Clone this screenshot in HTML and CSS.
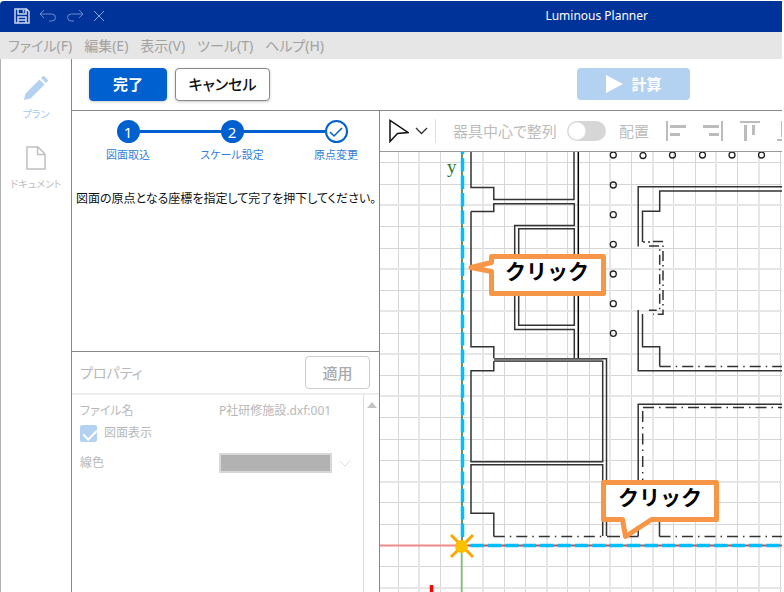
FILE: index.html
```
<!DOCTYPE html>
<html lang="ja">
<head>
<meta charset="utf-8">
<title>Luminous Planner</title>
<link rel="stylesheet" href="styles.css">
</head>
<body>
<div class="app">
  <header class="titlebar">
    <div class="quick">
      <button type="button" aria-label="保存"><svg width="16" height="16" viewBox="0 0 16 16" fill="none" stroke="#c9d6f2" stroke-width="1.5"><path d="M1 1h11.5L15 3.500V15H1zM4 1v5h8V1M9.500 2v2.500M4 15V9h8v6M4 12h8"/></svg></button>
      <button type="button" aria-label="元に戻す" disabled><svg width="18" height="14" viewBox="0 0 18 14" fill="none" stroke="#6f8cc8" stroke-width="1"><path d="M5 1L1 5l4 4M1 5h11.500q4 0 4 3.500t-4 3.500H10"/></svg></button>
      <button type="button" aria-label="やり直す" disabled><svg width="18" height="14" viewBox="0 0 18 14" fill="none" stroke="#6f8cc8" stroke-width="1"><path d="M13 1l4 4-4 4M17 5H5.500q-4 0-4 3.500t4 3.500H8"/></svg></button>
      <button type="button" aria-label="削除" disabled><svg width="12" height="12" viewBox="0 0 12 12" stroke="#8da4d6" stroke-width="1"><path d="M1 1l10 10M11 1L1 11"/></svg></button>
    </div>
    <h1 class="title">Luminous Planner</h1>
  </header>
  <nav class="menubar">
    <a href="#">ファイル(F)</a>
    <a href="#">編集(E)</a>
    <a href="#">表示(V)</a>
    <a href="#">ツール(T)</a>
    <a href="#">ヘルプ(H)</a>
  </nav>
  <div class="body">
    <nav class="rail">
      <a class="rail-item active" href="#">
        <svg width="24" height="24" viewBox="0 0 24 24" fill="#b3d1f0"><path d="M0 24l1.500-6.500L15.500 3.500l5 5L6.500 22.500zM17 2l1.800-1.800q.7-.5 1.400.1l3.500 3.500q.6.700 0 1.400L22 7z"/></svg>
        <span>プラン</span>
      </a>
      <a class="rail-item" href="#">
        <svg width="20" height="24" viewBox="0 0 20 24" fill="none" stroke="#c0c0c0" stroke-width="1.500"><path d="M1 1h11l7 7v15H1zM11.500 1v7.500H19"/></svg>
        <span>ドキュメント</span>
      </a>
    </nav>
    <div class="main">
      <div class="actions">
        <button type="button" class="btn primary">完了</button>
        <button type="button" class="btn">キャンセル</button>
        <button type="button" class="btn calc" disabled><svg width="18" height="18" viewBox="0 0 18 18" fill="#fff"><path d="M1 0l17 9-17 9z"/></svg>計算</button>
      </div>
      <div class="work">
        <aside class="side">
          <section class="wizard">
            <ol class="steps">
              <li><span class="dot">1</span><span class="step-label">図面取込</span></li>
              <li><span class="dot">2</span><span class="step-label">スケール設定</span></li>
              <li><span class="dot open"><svg width="14" height="12" viewBox="0 0 14 12" fill="none" stroke="#0060d0" stroke-width="1.500"><path d="M1 6l4 4 8-8"/></svg></span><span class="step-label">原点変更</span></li>
            </ol>
            <p class="hint">図面の原点となる座標を指定して完了を押下してください。</p>
          </section>
          <section class="props">
            <div class="props-head">
              <h2>プロパティ</h2>
              <button type="button" class="btn apply" disabled>適用</button>
            </div>
            <div class="props-body">
              <div class="fields">
                <div class="row"><span class="name">ファイル名</span><span class="value">P社研修施設.dxf:001</span></div>
                <div class="row"><input type="checkbox" id="show" class="tick" checked disabled><label for="show">図面表示</label></div>
                <div class="row"><label class="name" for="color">線色</label><select id="color" class="swatch" disabled></select><svg width="12" height="7" viewBox="0 0 12 7" fill="none" stroke="#dedede"><path d="M1 1l5 5 5-5"/></svg></div>
              </div>
              <div class="scroll"><svg width="10" height="6" viewBox="0 0 10 6" fill="#c4c4c4"><path d="M0 6l5-6 5 6z"/></svg></div>
            </div>
          </section>
        </aside>
        <section class="view">
          <div class="toolbar">
            <button type="button" class="tool pointer" aria-label="選択"><svg width="20" height="24" viewBox="0 0 20 24" fill="none" stroke="#111" stroke-width="1.500"><path d="M1 1.500v21l7.500-8L19 13.500z"/></svg><svg width="13" height="8" viewBox="0 0 13 8" fill="none" stroke="#333" stroke-width="1.300"><path d="M1 1l5.500 5.500L12 1"/></svg></button>
            <label class="align" for="center">器具中心で整列</label>
            <input type="checkbox" id="center" class="switch" disabled>
            <span class="place">配置</span>
            <button type="button" class="tool" aria-label="左揃え" disabled><svg width="20" height="20" viewBox="0 0 20 20" fill="#bcbcbc"><path d="M0 0h2v20H0zM4 4h16v3H4zM4 12h10v3H4z"/></svg></button>
            <button type="button" class="tool" aria-label="右揃え" disabled><svg width="20" height="20" viewBox="0 0 20 20" fill="#bcbcbc"><path d="M18 0h2v20h-2zM0 4h16v3H0zM6 12h10v3H6z"/></svg></button>
            <button type="button" class="tool" aria-label="上揃え" disabled><svg width="20" height="20" viewBox="0 0 20 20" fill="#bcbcbc"><path d="M0 0h20v2H0zM4 4h3v16H4zM12 4h3v10h-3z"/></svg></button>
            <button type="button" class="tool" aria-label="下揃え" disabled><svg width="20" height="20" viewBox="0 0 20 20" fill="#bcbcbc"><path d="M0 18h20v2H0zM4 0h3v16H4zM12 6h3v10h-3z"/></svg></button>
          </div>
          <div class="canvas">
            <svg class="plan" role="img" aria-label="図面">
              <g transform="translate(-380 -152)" fill="none">
                <path stroke="#d6d6d6" d="M398.500 152V600M440.500 152V600M504.500 152V600M525.500 152V600M567.500 152V600M589.500 152V600M631.500 152V600M673.500 152V600M695.500 152V600M737.500 152V600M780.500 152V600M379 162.500H784M379 184.500H784M379 226.500H784M379 248.500H784M379 290.500H784M379 333.500H784M379 375.500H784M379 417.500H784M379 439.500H784M379 460.500H784M379 502.500H784M379 524.500H784M379 566.500H784"/>
                <path stroke="#e6e6e6" stroke-width="2" d="M419 152V600M483 152V600M547 152V600M610 152V600M653 152V600M716 152V600M759 152V600M379 205H784M379 269H784M379 311H784M379 354H784M379 396H784M379 482H784M379 588H784"/>
                <g stroke="#333" stroke-width="1.500">
                  <path d="M471 152V187.500H493.800V199.500H574V152M471 211.500H493.800V203.700H574.300V225.500H514.700V329.500H574.300V358"/>
                  <path d="M471 211.500V346.700H493.800V358M518.700 228.700H574.300V325.200H518.700z"/>
                  <path d="M578.300 152V358" stroke="#000"/>
                  <path d="M493.800 358.700H606.500V536M493.800 361.200H602.700V461.700H471V370.700H493.800V361.200"/>
                  <path d="M494 360H602" stroke="#777" stroke-width="3"/>
                  <path d="M602.700 536V464.700H471V513.300H493.800V536.500"/>
                  <path d="M784 186.700H638.200V246.500M784 191H659.700V211.300H642.500V242"/>
                  <path d="M638.200 310V370.700H784M642.500 314V346.700H659.700V366.500M638.200 536V404.300H784M659.500 520V536.500M607 536.500H620M628 536.500H638.500"/>
                  <path stroke-dasharray="11 5 1.500 5" d="M493.800 536.500H602M659.500 536.500H784M659.700 366.500H784M643 407.500H784M642.700 411V480"/>
                  <path stroke-dasharray="10 4 1.500 4" d="M653 241.500H663V314.300H653M649 246H659.700V310.300H649M643 242H645M648 242H650"/>
                </g>
                <g stroke="#222" stroke-width="1.300">
                  <circle cx="613.300" cy="155" r="3"/><circle cx="613.300" cy="185" r="3"/><circle cx="613.300" cy="214.700" r="3"/><circle cx="613.300" cy="244.300" r="3"/><circle cx="613.300" cy="274" r="3"/><circle cx="613.300" cy="303.700" r="3"/><circle cx="613.300" cy="333.300" r="3"/>
                  <circle cx="643" cy="155.500" r="3"/><circle cx="672.500" cy="155" r="3"/><circle cx="702.500" cy="155" r="3"/><circle cx="732" cy="155" r="3"/><circle cx="761.500" cy="155" r="3"/>
                </g>
                <path stroke="#f08a8a" stroke-width="2" d="M379 545.500H461"/>
                <path stroke="#8cbb8c" stroke-width="2" d="M461.700 546V600"/>
                <path stroke="#c0504a" stroke-width="2" d="M462 545.500H784"/>
                <path stroke="#3c6b2a" stroke-width="1.500" d="M462 152V545"/>
                <path stroke="#00bfff" stroke-width="3.500" stroke-dasharray="13.400 4" d="M470.500 545.500H784M462.500 537V152"/>
                <path stroke="#f00" stroke-width="3.500" d="M431.500 585V600"/>
                <path stroke="#ffa500" stroke-width="3" d="M451 535l22 22M473 535l-22 22"/>
                <circle cx="461.500" cy="546.500" r="6.500" fill="#ffc000"/>
                <text class="axis" x="447" y="173">y</text>
                <path class="callout" d="M491.500 256.500H603.500V293.500H491.500V271.500L471 267.500L491.500 262.500z"/>
                <text class="callout-text" x="505" y="279">クリック</text>
                <path class="callout" d="M603.500 482.500H716.500V519.500H651.500L625.500 536.500L622.500 519.500H603.500z"/>
                <text class="callout-text" x="618" y="505">クリック</text>
              </g>
            </svg>
          </div>
        </section>
      </div>
    </div>
  </div>
</div>
</body>
</html>
```
FILE: styles.css
```
* { box-sizing: border-box; }
body {
  margin: 0;
  font-family: "Noto Sans", "Noto Sans CJK JP", sans-serif;
  font-feature-settings: "palt";
  color: #111;
  background: #fff;
}
button, input, select { font: inherit; font-feature-settings: inherit; }
button { padding: 0; border: 0; background: none; }
a { color: inherit; text-decoration: none; }
h1, h2, p, ol { margin: 0; padding: 0; font-weight: 400; }
svg { display: block; flex: none; }

.app {
  display: flex;
  flex-direction: column;
  height: 100vh;
  overflow: hidden;
  padding: 1px 2px 0 0;
}
.titlebar {
  display: flex;
  align-items: center;
  flex: none;
  height: 31px;
  padding: 0 134px 2px 14px;
  background: #003399;
  border-radius: 4px 0 0 0;
}
.quick { display: flex; align-items: center; gap: 9px; }
.title { margin-left: auto; font-size: 12px; line-height: 16px; color: #fff; }
.menubar {
  display: flex;
  align-items: center;
  flex: none;
  gap: 12px;
  height: 27px;
  padding-left: 8px;
  background: #e6e6e6;
  color: #a2a2a2;
  font-size: 14px;
  line-height: 20px;
}
.body { display: flex; flex: 1; min-height: 0; border-left: 1px solid #b0b0b0; }
.rail {
  display: flex;
  flex-direction: column;
  flex: none;
  gap: 24px;
  width: 71px;
  padding-top: 17px;
  border-right: 1px solid #888;
}
.rail-item {
  display: flex;
  flex-direction: column;
  align-items: center;
  gap: 6px;
  font-size: 10px;
  line-height: 16px;
  color: #c0c0c0;
}
.rail-item.active { color: #a6c9ef; }
.main { display: flex; flex-direction: column; flex: 1; min-width: 0; }
.actions {
  display: flex;
  align-items: center;
  flex: none;
  gap: 8px;
  height: 52px;
  padding: 0 92px 1px 17px;
  border-bottom: 1px solid #888;
}
.btn {
  display: flex;
  align-items: center;
  justify-content: center;
  gap: 8px;
  width: 95px;
  height: 33px;
  border: 1px solid #888;
  border-radius: 4px;
  background: #fff;
  color: #111;
  font-size: 15px;
  font-weight: 500;
  line-height: 20px;
  box-shadow: 0 1px 3px #0003;
}
.btn.primary { width: 78px; border-color: #0060d0; background: #0060d0; color: #fff; font-weight: 700; }
.btn.calc {
  width: 113px;
  height: 32px;
  margin-left: auto;
  border: 0;
  background: #b3d1f0;
  color: #fff;
  font-weight: 700;
  box-shadow: none;
}
.work { display: flex; flex: 1; min-height: 0; }
.side {
  display: flex;
  flex-direction: column;
  flex: none;
  width: 308px;
  border-right: 1px solid #888;
}
.wizard { flex: none; height: 241px; border-bottom: 1px solid #888; }
.steps { display: flex; list-style: none; padding: 9px 0 0 4px; }
.steps li {
  display: flex;
  flex-direction: column;
  align-items: center;
  flex: none;
  gap: 4px;
  width: 104px;
  background: linear-gradient(#0060d0, #0060d0) 0 10px / 100% 3px no-repeat;
}
.steps li:first-child { background-position: 52px 10px; }
.steps li:last-child { background-size: 52px 3px; }
.dot {
  display: flex;
  align-items: center;
  justify-content: center;
  width: 23px;
  height: 23px;
  border: 2px solid #0060d0;
  border-radius: 50%;
  background: #0060d0;
  color: #fff;
  font-size: 15px;
  line-height: 20px;
}
.dot.open { background: #fff; }
.step-label { font-size: 11px; line-height: 16px; color: #3380d9; }
.hint { padding: 26px 0 0 4px; font-size: 12px; line-height: 20px; white-space: nowrap; }
.props { display: flex; flex-direction: column; flex: 1; min-height: 0; color: #b8b8b8; }
.props-head {
  display: flex;
  align-items: center;
  justify-content: space-between;
  flex: none;
  height: 43px;
  padding: 0 9px 0 8px;
  border-bottom: 2px solid #eee;
}
.props-head h2 { font-size: 14px; line-height: 20px; }
.btn.apply { width: 65px; border-color: #ccc; color: #aaa; box-shadow: none; }
.props-body { display: flex; flex: 1; font-size: 12px; line-height: 20px; }
.fields { flex: 1; padding: 5px 12px 0 8px; }
.row { display: flex; align-items: center; gap: 7px; height: 22px; }
.row + .row + .row { height: 38px; }
.name { width: 132px; }
.tick {
  appearance: none;
  width: 17px;
  height: 17px;
  margin: 0;
  border-radius: 2px;
  background: #b3d1f0;
  position: relative;
}
.tick::after {
  content: "";
  position: absolute;
  left: 6px;
  top: 2px;
  width: 6px;
  height: 11px;
  border: solid #fff;
  border-width: 0 2px 2px 0;
  transform: rotate(45deg);
}
.swatch {
  appearance: none;
  width: 113px;
  height: 20px;
  border: 2px solid #d8d8d8;
  border-radius: 0;
  background: #b2b2b2;
  opacity: 1;
}
.scroll {
  display: flex;
  justify-content: center;
  width: 17px;
  padding-top: 7px;
  border-left: 1px solid #ddd;
}
.view { display: flex; flex-direction: column; flex: 1; min-width: 0; }
.toolbar {
  display: flex;
  align-items: center;
  flex: none;
  gap: 17px;
  height: 41px;
  padding-left: 9px;
  border-bottom: 1px solid #999;
  overflow: hidden;
  color: #bcbcbc;
  font-size: 15px;
  line-height: 20px;
  white-space: nowrap;
}
.tool { flex: none; }
.pointer {
  display: flex;
  align-items: center;
  gap: 6px;
  padding-right: 7px;
  border-right: 1px solid #e0e0e0;
}
.align { margin-right: -7px; }
.switch {
  appearance: none;
  flex: none;
  width: 39px;
  height: 20px;
  margin: 0 -4px 0 0;
  border-radius: 10px;
  background: radial-gradient(circle at 10px 10px, #fff 8px, #d6d6d6 9px);
}
.canvas { flex: 1; min-height: 0; }
.plan { width: 100%; height: 100%; overflow: hidden; }
.axis { fill: #2e7d32; font-family: "Liberation Serif", serif; font-size: 19px; }
.callout { fill: #fff; stroke: #f79646; stroke-width: 5px; stroke-linejoin: round; }
.callout-text { fill: #000; font-size: 21px; font-weight: 700; font-feature-settings: normal; }
```
